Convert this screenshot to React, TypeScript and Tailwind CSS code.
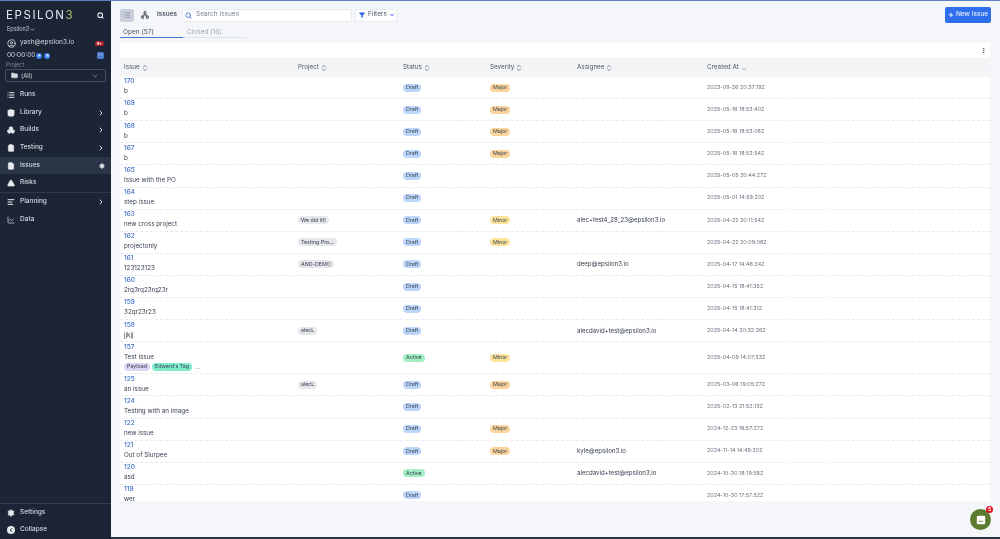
import { Search, List, Network, ChevronDown, ChevronRight, ChevronsUpDown, Filter, Plus, MoreVertical, Folder, Settings, ChevronLeft, CircleUser, Database, Boxes, ClipboardList, FileText, TriangleAlert, AlignLeft, ChartLine, Play, Pause, Calendar } from "lucide-react";
import type { ReactNode } from "react";

type Row = { id: string; title: string; project?: string; status: "Draft" | "Active"; severity?: "Major" | "Minor"; assignee?: string; created: string; tags?: boolean };

const rows: Row[] = [
  { id: "170", title: "b", status: "Draft", severity: "Major", created: "2023-09-26 20:37:19Z" },
  { id: "169", title: "b", status: "Draft", severity: "Major", created: "2025-05-16 18:53:40Z" },
  { id: "168", title: "b", status: "Draft", severity: "Major", created: "2025-05-16 18:53:08Z" },
  { id: "167", title: "b", status: "Draft", severity: "Major", created: "2025-05-16 18:52:54Z" },
  { id: "165", title: "Issue with the PO", status: "Draft", created: "2025-05-05 20:44:27Z" },
  { id: "164", title: "step issue", status: "Draft", created: "2025-05-01 14:59:20Z" },
  { id: "163", title: "new cross project", project: "We did it!!", status: "Draft", severity: "Minor", assignee: "alec+test4_28_23@epsilon3.io", created: "2025-04-22 20:11:54Z" },
  { id: "162", title: "projectonly", project: "Testing Pro...", status: "Draft", severity: "Minor", created: "2025-04-22 20:09:08Z" },
  { id: "161", title: "123123123", project: "AND-DEMO", status: "Draft", assignee: "deep@epsilon3.io", created: "2025-04-17 14:46:24Z" },
  { id: "160", title: "2rq3rq23rq23r", status: "Draft", created: "2025-04-15 18:41:35Z" },
  { id: "159", title: "32qr23r23", status: "Draft", created: "2025-04-15 18:41:31Z" },
  { id: "158", title: "jjkjj", project: "alecL", status: "Draft", assignee: "alecdavid+test@epsilon3.io", created: "2025-04-14 20:32:26Z" },
  { id: "157", title: "Test issue", status: "Active", severity: "Minor", created: "2025-04-09 14:07:33Z", tags: true },
  { id: "125", title: "an issue", project: "alecL", status: "Draft", severity: "Major", created: "2025-03-06 19:05:27Z" },
  { id: "124", title: "Testing with an image", status: "Draft", created: "2025-02-13 21:52:13Z" },
  { id: "122", title: "new issue", status: "Draft", severity: "Major", created: "2024-12-23 19:57:27Z" },
  { id: "121", title: "Out of Slurpee", status: "Draft", severity: "Major", assignee: "kyle@epsilon3.io", created: "2024-11-14 14:49:20Z" },
  { id: "120", title: "asd", status: "Active", assignee: "alecdavid+test@epsilon3.io", created: "2024-10-30 18:19:58Z" },
  { id: "119", title: "wer", status: "Draft", created: "2024-10-30 17:57:52Z" },
];

function NavItem({ icon, label, arrow, active, right }: { icon: ReactNode; label: string; arrow?: boolean; active?: boolean; right?: ReactNode }) {
  return (
    <div className={`flex h-[17.7px] items-center pl-[7px] pr-[6px] text-[6.5px] font-medium text-[#d5dae1] ${active ? "bg-[#2a3647]" : ""}`}>
      <span className="flex w-[13px] text-[#e6e9ed]">{icon}</span>
      <span className="flex-1">{label}</span>
      {arrow && <ChevronRight size={8} strokeWidth={3} className="text-[#d5dae1]" />}
      {right}
    </div>
  );
}

function Sidebar() {
  return (
    <aside className="flex h-full w-[111px] shrink-0 flex-col bg-[#1b2535] text-[#d5dae1]">
      <div className="flex items-center justify-between pl-[6px] pr-[7px] pt-[7px]">
        <span className="text-[11.5px] font-normal leading-[14px] tracking-[1.6px] text-[#e4e8ec]">
          EPSILON<span className="text-[#a9c46c]">3</span>
        </span>
        <Search size={7} strokeWidth={3.5} className="text-[#e4e8ec]" />
      </div>
      <div className="mt-[3px] flex items-center gap-[1px] pl-[7px] text-[5.5px] text-[#c4cad2]">
        Epsilon3
        <ChevronDown size={5} strokeWidth={4} />
      </div>
      <div className="mt-[5px] flex items-center pl-[7px] pr-[7px] text-[6.5px] text-[#d5dae1]">
        <CircleUser size={9} className="mr-[4px] text-[#e6e9ed]" />
        <span className="flex-1">yash@epsilon3.io</span>
        <span className="rounded-full bg-[#b3202a] px-[2px] text-[4px] font-bold leading-[5px] text-white">9+</span>
      </div>
      <div className="mt-[3px] flex items-center pl-[7px] pr-[7px] text-[6.5px] leading-[9px] text-[#d5dae1]">
        <span>00:00:00</span>
        <span className="ml-[1px] flex h-[6px] w-[6px] items-center justify-center rounded-full bg-[#3b82f6]"><Play size={3} fill="white" className="text-white" /></span>
        <span className="ml-[2px] flex h-[6px] w-[6px] items-center justify-center rounded-full bg-[#3b82f6]"><Pause size={3} fill="white" className="text-white" /></span>
        <span className="ml-auto flex h-[7px] w-[7px] items-center justify-center rounded-[1px] bg-[#3c6fc4]"><Calendar size={5} className="text-[#a9c4f0]" /></span>
      </div>
      <div className="mt-[2px] pl-[6px] text-[5.5px] leading-[7px] text-[#7d8795]">Project</div>
      <div className="mx-[5px] flex h-[13px] items-center rounded-[2px] border border-[#47505e] pl-[5px] pr-[6px] text-[6px] text-[#d5dae1]">
        <Folder size={7} fill="#d5dae1" className="mr-[3px]" />
        <span className="flex-1">(All)</span>
        <ChevronDown size={8} className="text-[#97a0ac]" />
      </div>
      <div className="mt-[4px] flex flex-col">
        <NavItem icon={<List size={8} strokeWidth={3} />} label="Runs" />
        <NavItem icon={<Database size={8} fill="#e6e9ed" />} label="Library" arrow />
        <NavItem icon={<Boxes size={8} fill="#e6e9ed" />} label="Builds" arrow />
        <NavItem icon={<ClipboardList size={8} fill="#e6e9ed" />} label="Testing" arrow />
        <NavItem icon={<FileText size={8} fill="#e6e9ed" />} label="Issues" active right={<Settings size={6} fill="#d5dae1" />} />
        <NavItem icon={<TriangleAlert size={8} fill="#e6e9ed" className="text-[#e6e9ed]" />} label="Risks" />
        <div className="h-px bg-[#2f3a4a]" />
        <NavItem icon={<AlignLeft size={8} strokeWidth={3} />} label="Planning" arrow />
        <NavItem icon={<ChartLine size={8} />} label="Data" />
      </div>
      <div className="mt-auto border-t border-[#333e4e]">
        <div className="flex h-[17.5px] items-center pl-[7px] text-[6.5px] font-medium text-[#d5dae1]">
          <Settings size={8} fill="#e6e9ed" className="mr-[5px] text-[#e6e9ed]" />
          Settings
        </div>
        <div className="flex h-[17.5px] items-center pl-[7px] text-[6.5px] font-medium text-[#d5dae1]">
          <span className="mr-[5px] flex h-[8px] w-[8px] items-center justify-center rounded-full bg-[#e6e9ed]"><ChevronLeft size={6} strokeWidth={4} className="text-[#1b2535]" /></span>
          Collapse
        </div>
      </div>
    </aside>
  );
}

function Sort({ children, down }: { children: string; down?: boolean }) {
  return (
    <div className="flex items-center gap-[1px] text-[6.3px] leading-none text-[#4b5563]">
      {children}
      {down ? <ChevronDown size={6} className="ml-[1px] mt-[2px] text-[#4b5563]" /> : <ChevronsUpDown size={8} className="text-[#4b5563]" />}
    </div>
  );
}

function Pill({ text, cls }: { text: string; cls: string }) {
  return <span className={`inline-flex h-[8px] items-center rounded-full px-[3px] text-[5.3px] leading-none text-[#374151] ${cls}`}>{text}</span>;
}

const cols = "grid grid-cols-[174px_105px_87px_87px_130px_1fr]";

function TableRow({ r }: { r: Row }) {
  return (
    <div className={`${cols} items-center border-b border-dashed border-[#e8eaee] pl-[4px] ${r.tags ? "h-[32px]" : "h-[22.12px]"}`}>
      <div className="flex flex-col pb-[2px] leading-[9px]">
        <span className="text-[6.5px] font-medium text-[#3f6fc4]">{r.id}</span>
        <span className="mt-[1px] text-[6.3px] leading-[8.5px] text-[#374151]">{r.title}</span>
        {r.tags && (
          <div className="mt-[1px] flex items-center gap-[2px]">
            <Pill text="Payload" cls="bg-[#ddd3f5]" />
            <Pill text="Edward's Tag" cls="bg-[#7eeccb]" />
            <span className="ml-[1px] text-[6px] text-[#6b7280]">...</span>
          </div>
        )}
      </div>
      <div className="flex leading-none">{r.project && <Pill text={r.project} cls="bg-[#e5e7eb]" />}</div>
      <div className="flex leading-none"><Pill text={r.status} cls={r.status === "Draft" ? "bg-[#bcd5fa]" : "bg-[#a4eec4]"} /></div>
      <div className="flex leading-none">{r.severity && <Pill text={r.severity} cls={r.severity === "Major" ? "bg-[#fbd49c]" : "bg-[#fde29a]"} />}</div>
      <div className="text-[6.1px] leading-none text-[#374151]">{r.assignee}</div>
      <div className="text-[5.4px] leading-none text-[#6b7280]">{r.created}</div>
    </div>
  );
}

function Main() {
  return (
    <main className="relative flex h-full min-w-0 flex-1 flex-col border-b-2 border-[#2a3142] bg-[#f4f6f9] pl-[9px] pr-[10px]">
      <div className="flex h-[27px] shrink-0 items-center pt-[1px]">
        <span className="flex h-[13px] w-[14px] items-center justify-center rounded-[2px] bg-[#c9d0dc] text-[#7f8a9c]"><List size={8} /></span>
        <span className="ml-[7px] text-[#4b5563]"><Network size={8} strokeWidth={3} /></span>
        <span className="ml-[8px] text-[6.5px] font-medium text-[#374151]">Issues</span>
        <div className="ml-[5px] flex h-[13px] w-[170px] items-center rounded-[2px] border border-[#e8ebef] bg-white pl-[2px] text-[6.5px] text-[#7b8490]">
          <Search size={7} strokeWidth={3} className="mr-[4px] text-[#3f6fc4]" />
          Search Issues
        </div>
        <div className="ml-[3px] flex h-[13px] w-[42px] items-center rounded-[2px] border border-[#e8ebef] bg-white pl-[3px] text-[6.5px] text-[#4b5563]">
          <Filter size={6} fill="#2563eb" className="mr-[3px] text-[#2563eb]" />
          Filters
          <ChevronDown size={6} strokeWidth={4} className="ml-[2px] text-[#2563eb]" />
        </div>
        <div className="ml-auto mr-[-1px] flex h-[16px] w-[46px] items-center justify-center gap-[2px] rounded-[2px] bg-[#2f6fed] text-[6.5px] font-medium text-[#e6eeff]">
          <Plus size={6} strokeWidth={4} />
          New Issue
        </div>
      </div>
      <div className="flex h-[10px] shrink-0 text-[6.5px]">
        <div className="flex w-[63px] items-center border-b border-[#3f78d8] pl-[3px] text-[#4b5563]">Open (57)</div>
        <div className="flex w-[63px] items-center border-b border-[#dfe4ea] pl-[4px] text-[#a0a7b2]">Closed (16)</div>
      </div>
      <div className="mt-[5px] flex h-[15px] shrink-0 items-center justify-end bg-white pr-[3px] text-[#4b5563]">
        <MoreVertical size={7} strokeWidth={3} />
      </div>
      <div className={`${cols} h-[19px] shrink-0 items-center bg-[#f4f5f7] pl-[4px]`}>
        <Sort>Issue</Sort><Sort>Project</Sort><Sort>Status</Sort><Sort>Severity</Sort><Sort>Assignee</Sort><Sort down>Created At</Sort>
      </div>
      <div className="h-[424px] shrink-0 overflow-hidden bg-white">
        {rows.map((r) => <TableRow key={r.id} r={r} />)}
      </div>
      <div className="absolute bottom-[7px] right-[9px] flex h-[21px] w-[21px] items-center justify-center rounded-full bg-[#5b7b2e]">
        <svg viewBox="0 0 12 12" className="h-[10px] w-[10px]">
          <rect x="1" y="1" width="10" height="10" rx="1.5" fill="white" />
          <path d="M3.5 7.5h5" stroke="#5b7b2e" strokeWidth="1" />
        </svg>
        <span className="absolute right-[-2px] top-[-3px] flex h-[7px] w-[7px] items-center justify-center rounded-full bg-[#e0101c] text-[5px] font-bold text-white">5</span>
      </div>
    </main>
  );
}

export default function App() {
  return (
    <div className="flex h-[539px] w-[1000px] overflow-hidden border-t border-[#5c7fc2] bg-[#1b2535] font-['Inter',sans-serif] blur-[0.3px]">
      <Sidebar />
      <Main />
    </div>
  );
}
